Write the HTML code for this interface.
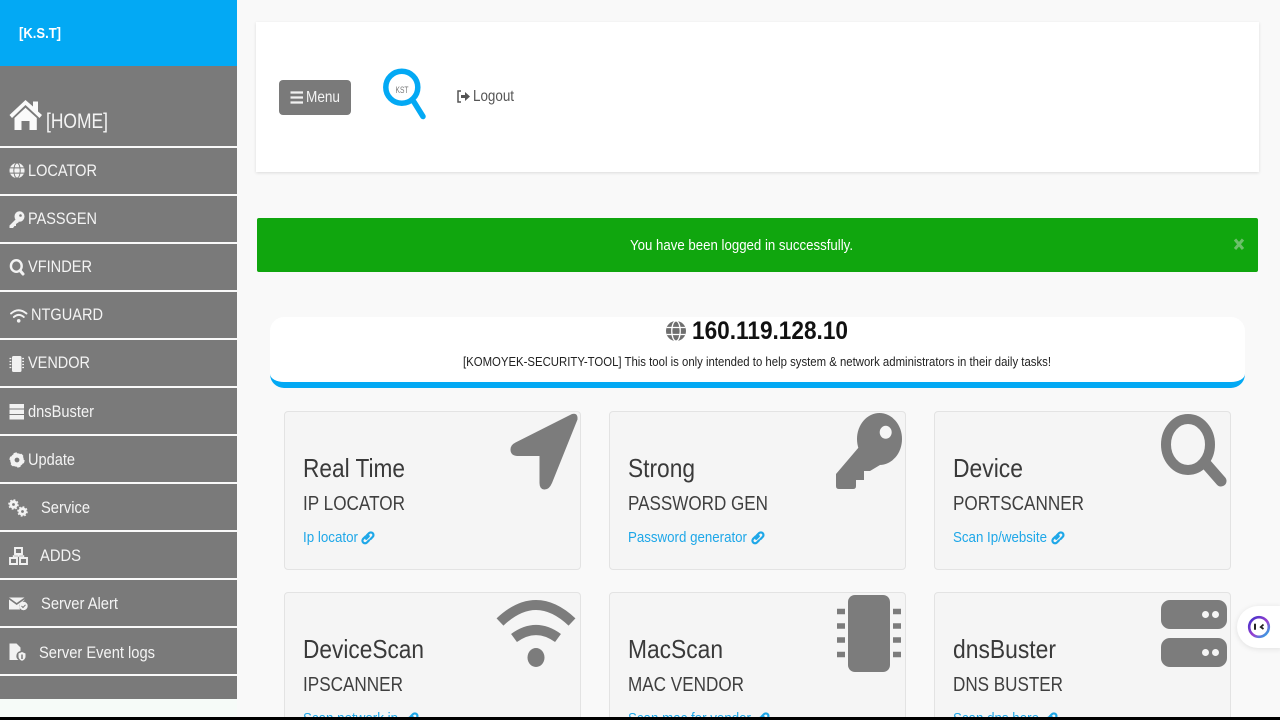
<!DOCTYPE html>
<html lang="en">
<head>
<meta charset="utf-8">
<title>KST</title>
<style>
html,body{margin:0;padding:0;width:1280px;height:720px;overflow:hidden;background:#f9f9f9;font-family:"Liberation Sans",Arial,sans-serif}
#w{position:relative;width:1280px;height:720px;overflow:hidden;background:#f9f9f9}
.b{position:absolute;box-sizing:border-box}
.n{left:0;width:237px;background:#7a7a7a}
.c{width:297px;height:159px;background:#f5f5f5;border:1px solid #e3e3e3;border-radius:4px}
svg#o{position:absolute;left:0;top:0}
.nav{fill:#f4f4f4;font-size:17px}
.t{fill:#3a3a3a;font-size:26px}
.s{fill:#3f3f3f;font-size:20px}
.l{fill:#1ea7e8;font-size:15px}
</style>
</head>
<body>
<div id="w">
<div class="b" style="left:0;top:0;width:237px;height:66px;background:#03a9f4"></div>
<div class="b" style="left:0;top:699px;width:237px;height:18px;background:#f6fbf8"></div>
<div class="b n" style="top:66px;height:80px"></div>
<div class="b n" style="top:148px;height:46px"></div>
<div class="b n" style="top:196px;height:46px"></div>
<div class="b n" style="top:244px;height:46px"></div>
<div class="b n" style="top:292px;height:46px"></div>
<div class="b n" style="top:340px;height:46px"></div>
<div class="b n" style="top:388px;height:46px"></div>
<div class="b n" style="top:436px;height:46px"></div>
<div class="b n" style="top:484px;height:46px"></div>
<div class="b n" style="top:532px;height:46px"></div>
<div class="b n" style="top:580px;height:46px"></div>
<div class="b n" style="top:628px;height:46px"></div>
<div class="b n" style="top:676px;height:23px"></div>

<div class="b" style="left:256px;top:22px;width:1003px;height:150px;background:#fff;box-shadow:0 1px 3px rgba(0,0,0,.12)"></div>
<div class="b" style="left:279px;top:80px;width:72px;height:35px;background:#7a7a7a;border-radius:4px"></div>
<div class="b" style="left:257px;top:218px;width:1001px;height:54px;background:#10a60e;border-radius:2px"></div>
<div class="b" style="left:270px;top:317px;width:975px;height:71px;background:#fff;border-bottom:6px solid #03a9f4;border-radius:14px"></div>

<div class="b c" style="left:284px;top:411px"></div>
<div class="b c" style="left:609px;top:411px"></div>
<div class="b c" style="left:934px;top:411px"></div>
<div class="b c" style="left:284px;top:592px"></div>
<div class="b c" style="left:609px;top:592px"></div>
<div class="b c" style="left:934px;top:592px"></div>

<svg id="o" width="1280" height="720" viewBox="0 0 1280 720" xmlns="http://www.w3.org/2000/svg">
<defs>
<g id="globe"><circle cx="8" cy="8" r="8" fill="currentColor"/><g fill="none" stroke="var(--bg)" stroke-width="1"><ellipse cx="8" cy="8" rx="3.4" ry="8"/><path d="M.5 5.2h15M.5 10.8h15"/></g></g>
<path id="linkic" d="M6.200 8.800 8.800 6.200M5.400 6.600 3.200 8.800a2.600 2.600 0 0 0 3.700 3.700L9 10.400M6.800 5.400 9 3.200a2.600 2.600 0 0 1 3.700 3.700L10.500 9.100" fill="none" stroke="#1ea7e8" stroke-width="2.200" stroke-linecap="round"/>
</defs>

<!-- sidebar text -->
<text x="19" y="38" font-size="15" font-weight="700" fill="#fff" textLength="42" lengthAdjust="spacingAndGlyphs">[K.S.T]</text>
<text x="46" y="128" font-size="21" fill="#f4f4f4" textLength="62" lengthAdjust="spacingAndGlyphs">[HOME]</text>
<text class="nav" x="28" y="176" textLength="69" lengthAdjust="spacingAndGlyphs">LOCATOR</text>
<text class="nav" x="28" y="224" textLength="69" lengthAdjust="spacingAndGlyphs">PASSGEN</text>
<text class="nav" x="28" y="272" textLength="64" lengthAdjust="spacingAndGlyphs">VFINDER</text>
<text class="nav" x="31" y="320" textLength="72" lengthAdjust="spacingAndGlyphs">NTGUARD</text>
<text class="nav" x="28" y="368" textLength="62" lengthAdjust="spacingAndGlyphs">VENDOR</text>
<text class="nav" x="28" y="417" textLength="66" lengthAdjust="spacingAndGlyphs">dnsBuster</text>
<text class="nav" x="28" y="465" textLength="47" lengthAdjust="spacingAndGlyphs">Update</text>
<text class="nav" x="41" y="513" textLength="49" lengthAdjust="spacingAndGlyphs">Service</text>
<text class="nav" x="40" y="561" textLength="41" lengthAdjust="spacingAndGlyphs">ADDS</text>
<text class="nav" x="41" y="609" textLength="77" lengthAdjust="spacingAndGlyphs">Server Alert</text>
<text class="nav" x="39" y="658" textLength="116" lengthAdjust="spacingAndGlyphs">Server Event logs</text>

<!-- sidebar icons -->
<path d="M9.500 115 25.500 100 33 106.500V101.500H38V111.500L42 115 39.500 118 25.500 105 12 118Z" fill="#fafafa"/>
<path d="M14.500 118 25.500 107.800 36.800 118V130H29.500V121H21.500V130H14.500Z" fill="#fafafa"/>
<use href="#globe" transform="translate(9.500 163) scale(.94)" style="color:#f2f2f2;--bg:#7a7a7a"/>
<ellipse cx="19.500" cy="216.500" rx="5" ry="5.300" fill="#f2f2f2"/>
<path d="M16 219 9.500 225.500V228H13L14.500 226H16V224L19 222Z" fill="#f2f2f2"/>
<circle cx="20.500" cy="215.500" r="1.300" fill="#7a7a7a"/>
<ellipse cx="16.300" cy="266" rx="5.400" ry="5.800" fill="none" stroke="#f2f2f2" stroke-width="2.400"/>
<path d="M20 270.500 23 274" stroke="#f2f2f2" stroke-width="3" stroke-linecap="round"/>
<path d="M11 313.500Q18.500 307 26.500 313.500M13.800 317Q18.700 312.800 23.800 317" fill="none" stroke="#f2f2f2" stroke-width="1.900" stroke-linecap="round"/>
<circle cx="18.700" cy="320.800" r="1.800" fill="#f2f2f2"/>
<rect x="12" y="356" width="9.500" height="16" rx="1.500" fill="#f2f2f2"/>
<path d="M9.500 358.500h1.800M9.500 361.500h1.800M9.500 364.500h1.800M9.500 367.500h1.800M22.200 358.500h1.800M22.200 361.500h1.800M22.200 364.500h1.800M22.200 367.500h1.800" stroke="#f2f2f2" stroke-width="1.200"/>
<path d="M9.500 404h14.500v4.500H9.500ZM9.500 409.500h14.500V414H9.500ZM9.500 415h14.500v4.500H9.500Z" fill="#f2f2f2"/>
<circle cx="17" cy="460" r="4.600" fill="none" stroke="#f2f2f2" stroke-width="4.400"/>
<circle cx="17" cy="460" r="6.600" fill="none" stroke="#f2f2f2" stroke-width="2" stroke-dasharray="3.200 3.700"/>
<circle cx="13.500" cy="504.500" r="2.800" fill="none" stroke="#f2f2f2" stroke-width="2.800"/>
<circle cx="13.500" cy="504.500" r="4.600" fill="none" stroke="#f2f2f2" stroke-width="1.400" stroke-dasharray="1.800 1.800"/>
<circle cx="22.500" cy="511.500" r="2.800" fill="none" stroke="#f2f2f2" stroke-width="2.800"/>
<circle cx="22.500" cy="511.500" r="4.600" fill="none" stroke="#f2f2f2" stroke-width="1.400" stroke-dasharray="1.800 1.800"/>
<path d="M15 548h7v6h-7ZM10 558h7v6h-7ZM20 558h7v6h-7Z" fill="none" stroke="#f2f2f2" stroke-width="1.900"/>
<path d="M18.500 554v2M13.500 558v-2h10v2" fill="none" stroke="#f2f2f2" stroke-width="1.400"/>
<path d="M9 597.500h15.500L16.700 603 9 597.500Z" fill="#f2f2f2"/>
<path d="M9 599.500V609.500H20L19 605 24.500 600V599.500L16.700 605Z" fill="#f2f2f2"/>
<circle cx="23.500" cy="606" r="4.200" fill="#f2f2f2"/>
<path d="M21.500 606 23 607.500 25.500 604.800" fill="none" stroke="#7a7a7a" stroke-width="1"/>
<path d="M9.500 643.500h7l4 4v3.500a5 5 0 0 0-2 9h-9Z" fill="#f2f2f2"/>
<path d="M18.500 653.500 22 652l3.500 1.500v3c0 2-1.500 3.500-3.500 4.300-2-.8-3.500-2.300-3.500-4.300Z" fill="#f2f2f2"/>
<path d="M22 654.500v4.500" stroke="#7a7a7a" stroke-width="1.500"/>

<!-- top bar -->
<path d="M290.500 92.500h12.500M290.500 97.500h12.500M290.500 102.500h12.500" stroke="#f2f2f2" stroke-width="2.200"/>
<text x="306" y="102" font-size="16" fill="#f4f4f4" textLength="34" lengthAdjust="spacingAndGlyphs">Menu</text>
<circle cx="401.800" cy="87.300" r="16" fill="#fff" stroke="#03a9f4" stroke-width="5.500"/>
<path d="M414 102 423 116.500" stroke="#03a9f4" stroke-width="5.500" stroke-linecap="round"/>
<text x="395.500" y="93" font-size="9" fill="#777" textLength="13" lengthAdjust="spacingAndGlyphs">KST</text>
<path d="M461 91h-3v11h3" fill="none" stroke="#555" stroke-width="1.500"/>
<path d="M461 95h4v-3l5 4.500-5 4.500v-3h-4Z" fill="#555"/>
<text x="473" y="101" font-size="16" fill="#555" textLength="41" lengthAdjust="spacingAndGlyphs">Logout</text>

<!-- alert -->
<text x="630" y="250" font-size="15" fill="#fff" textLength="223" lengthAdjust="spacingAndGlyphs">You have been logged in successfully.</text>
<path d="M1235 239.500 1243 249M1243 239.500 1235 249" stroke="#6cc06a" stroke-width="3"/>

<!-- IP banner -->
<use href="#globe" transform="translate(666 321) scale(1.250)" style="color:#6e6e6e;--bg:#fff"/>
<text x="692" y="339" font-size="25" font-weight="700" fill="#111" textLength="156" lengthAdjust="spacingAndGlyphs">160.119.128.10</text>
<text x="463" y="366" font-size="13" fill="#222" textLength="588" lengthAdjust="spacingAndGlyphs">[KOMOYEK-SECURITY-TOOL] This tool is only intended to help system &amp; network administrators in their daily tasks!</text>

<!-- card text -->
<text class="t" x="303" y="477" textLength="102" lengthAdjust="spacingAndGlyphs">Real Time</text>
<text class="s" x="303" y="510" textLength="102" lengthAdjust="spacingAndGlyphs">IP LOCATOR</text>
<text class="l" x="303" y="542" textLength="55" lengthAdjust="spacingAndGlyphs">Ip locator</text>
<use href="#linkic" x="360" y="530"/>

<text class="t" x="628" y="477" textLength="67" lengthAdjust="spacingAndGlyphs">Strong</text>
<text class="s" x="628" y="510" textLength="140" lengthAdjust="spacingAndGlyphs">PASSWORD GEN</text>
<text class="l" x="628" y="542" textLength="119" lengthAdjust="spacingAndGlyphs">Password generator</text>
<use href="#linkic" x="750" y="530"/>

<text class="t" x="953" y="477" textLength="70" lengthAdjust="spacingAndGlyphs">Device</text>
<text class="s" x="953" y="510" textLength="131" lengthAdjust="spacingAndGlyphs">PORTSCANNER</text>
<text class="l" x="953" y="542" textLength="94" lengthAdjust="spacingAndGlyphs">Scan Ip/website</text>
<use href="#linkic" x="1050" y="530"/>

<text class="t" x="303" y="658" textLength="121" lengthAdjust="spacingAndGlyphs">DeviceScan</text>
<text class="s" x="303" y="691" textLength="100" lengthAdjust="spacingAndGlyphs">IPSCANNER</text>
<text class="l" x="303" y="723" textLength="95" lengthAdjust="spacingAndGlyphs">Scan network ip</text>
<use href="#linkic" x="404" y="711"/>

<text class="t" x="628" y="658" textLength="95" lengthAdjust="spacingAndGlyphs">MacScan</text>
<text class="s" x="628" y="691" textLength="116" lengthAdjust="spacingAndGlyphs">MAC VENDOR</text>
<text class="l" x="628" y="723" textLength="123" lengthAdjust="spacingAndGlyphs">Scan mac for vendor</text>
<use href="#linkic" x="755" y="711"/>

<text class="t" x="953" y="658" textLength="103" lengthAdjust="spacingAndGlyphs">dnsBuster</text>
<text class="s" x="953" y="691" textLength="110" lengthAdjust="spacingAndGlyphs">DNS BUSTER</text>
<text class="l" x="953" y="723" textLength="86" lengthAdjust="spacingAndGlyphs">Scan dns here</text>
<use href="#linkic" x="1043" y="711"/>

<!-- card icons -->
<path d="M572 414Q578 412.500 577.500 419.500L552 483Q549 490 544 489.500 539.500 489 539.500 483V456H517Q510.500 455.500 510.500 449.500 510.500 445 515.500 442.500Z" fill="#7c7c7c"/>
<path fill-rule="evenodd" d="M879.500 413A22.500 26 0 0 1 879.500 465 22.500 26 0 0 1 879.500 413ZM885.700 425.800A6 6.500 0 1 0 885.700 438.800 6 6.500 0 1 0 885.700 425.800Z" fill="#7c7c7c"/>
<path d="M859 447 836 474V486Q836 489 839 489H853Q856 489 856 486V480H864V471H870L880 465Z" fill="#7c7c7c"/>
<ellipse cx="1188" cy="444.500" rx="22" ry="25.500" fill="none" stroke="#7c7c7c" stroke-width="10"/>
<path d="M1207 465 1221 481" stroke="#7c7c7c" stroke-width="11" stroke-linecap="round"/>
<path d="M500 622Q536 588 572 622" fill="none" stroke="#7c7c7c" stroke-width="10"/>
<path d="M514 638Q536 622 558 638" fill="none" stroke="#7c7c7c" stroke-width="10"/>
<ellipse cx="536" cy="657.500" rx="8.500" ry="9.500" fill="#7c7c7c"/>
<rect x="848" y="595" width="42" height="77" rx="7" fill="#7c7c7c"/>
<path d="M837 611.500h8M837 626h8M837 640h8M837 654.500h8M893 611.500h8M893 626h8M893 640h8M893 654.500h8" stroke="#7c7c7c" stroke-width="5.500"/>
<rect x="1161" y="600" width="66" height="29" rx="9" fill="#7c7c7c"/>
<rect x="1161" y="638" width="66" height="29" rx="9" fill="#7c7c7c"/>
<g fill="#f5f5f5"><circle cx="1205.500" cy="614.500" r="3.500"/><circle cx="1215.500" cy="614.500" r="3.500"/><circle cx="1205.500" cy="652.500" r="3.500"/><circle cx="1215.500" cy="652.500" r="3.500"/></g>
</svg>

<!-- chat widget -->
<div class="b" style="left:1237px;top:606px;width:45px;height:42px;background:#fff;border-radius:21px 0 0 21px;box-shadow:0 1px 6px rgba(0,0,0,.1)"></div>
<svg class="b" style="left:1246px;top:614px" width="26" height="26" viewBox="0 0 26 26" xmlns="http://www.w3.org/2000/svg">
<defs><linearGradient id="g" x1="0" y1="0" x2="1" y2="1"><stop offset="0" stop-color="#3b2fc9"/><stop offset=".55" stop-color="#9a3fd0"/><stop offset="1" stop-color="#1fb6e8"/></linearGradient></defs>
<circle cx="13" cy="13" r="9.800" fill="#fff" stroke="url(#g)" stroke-width="2.600"/>
<path d="M9 10.500v4.500" stroke="#222" stroke-width="2" stroke-linecap="round"/>
<path d="M17.500 10.500 14.800 13l2.700 2" fill="none" stroke="#222" stroke-width="1.800"/>
</svg>

<div class="b" style="left:0;top:717px;width:1280px;height:3px;background:#000"></div>
</div>
</body>
</html>
